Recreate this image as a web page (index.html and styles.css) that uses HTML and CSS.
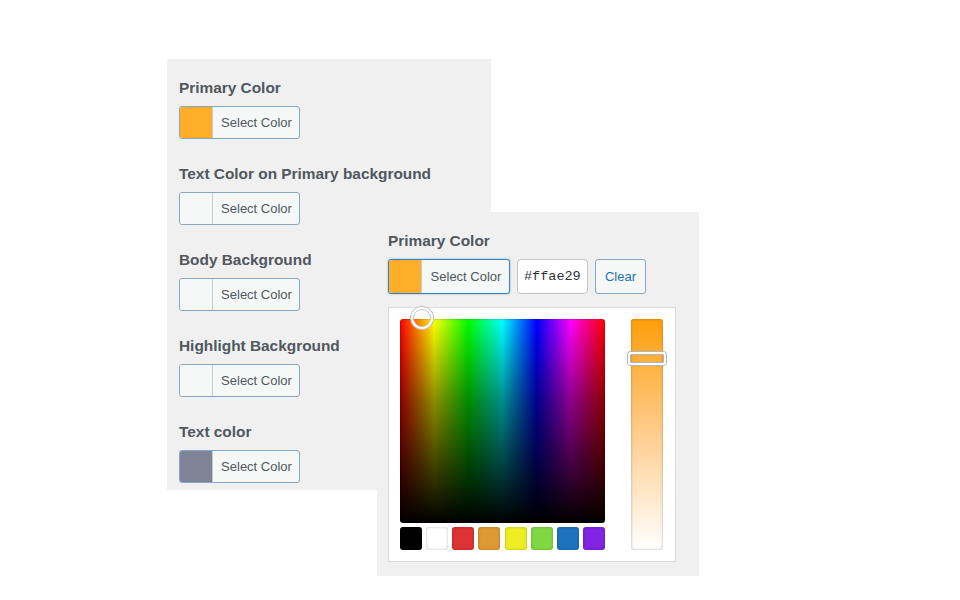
FILE: index.html
```html
<!DOCTYPE html>
<html lang="en">
<head>
  <meta charset="UTF-8">
  <title>Theme Colors</title>
  <link rel="stylesheet" href="styles.css">
</head>
<body>
  <div class="stage">
    <div class="panel">
      <div class="field">
        <h3>Primary Color</h3>
        <button class="color-result"><span class="swatch" style="background:#ffae29"></span><span class="label">Select Color</span></button>
      </div>
      <div class="field">
        <h3>Text Color on Primary background</h3>
        <button class="color-result"><span class="swatch" style="background:#f6f7f7"></span><span class="label">Select Color</span></button>
      </div>
      <div class="field">
        <h3>Body Background</h3>
        <button class="color-result"><span class="swatch" style="background:#f6f7f7"></span><span class="label">Select Color</span></button>
      </div>
      <div class="field">
        <h3>Highlight Background</h3>
        <button class="color-result"><span class="swatch" style="background:#f6f7f7"></span><span class="label">Select Color</span></button>
      </div>
      <div class="field">
        <h3>Text color</h3>
        <button class="color-result"><span class="swatch" style="background:#7c8496"></span><span class="label">Select Color</span></button>
      </div>
    </div>

    <div class="panel popup">
      <h3>Primary Color</h3>
      <div class="controls">
        <button class="color-result active"><span class="swatch" style="background:#ffae29"></span><span class="label">Select Color</span></button>
        <input class="hex" type="text" value="#ffae29">
        <button class="clear">Clear</button>
      </div>
      <div class="picker">
        <div class="left">
          <div class="square">
            <span class="dot"></span>
          </div>
          <div class="palette">
            <span style="background:#000"></span>
            <span style="background:#fff"></span>
            <span style="background:#dd3333"></span>
            <span style="background:#dd9933"></span>
            <span style="background:#eeee22"></span>
            <span style="background:#81d742"></span>
            <span style="background:#1e73be"></span>
            <span style="background:#8224e3"></span>
          </div>
        </div>
        <div class="slider">
          <span class="knob"></span>
        </div>
      </div>
    </div>
  </div>
</body>
</html>
```

FILE: styles.css
```css
* { margin:0; padding:0; box-sizing:border-box }
body {
  background:#fff; color:#50575e;
  font-family:'Liberation Sans',Arial,sans-serif;
}
.stage { position:relative; width:960px; height:600px; padding:59px 0 0 167px; }

.panel { width:324px; height:431px; background:#f0f0f0; padding:19px 12px 0; }
.field { margin-bottom:25px; }
h3 { font-size:15.4px; line-height:20px; font-weight:700; color:#50575e; margin-bottom:8px; }

.color-result {
  display:flex; height:33px; width:121px;
  border:1px solid #86a8c8; border-radius:3px; overflow:hidden;
  background:#f6f7f7; cursor:pointer; font-family:inherit;
}
.color-result .swatch { width:33px; border-right:1px solid #c8ccd0; }
.color-result .label { flex:1; font-size:13px; line-height:31px; color:#50575e; text-align:center; padding-left:1px; }

.popup {
  position:absolute; left:377px; top:212px;
  width:322px; height:364px; padding:19px 11px 0;
}
.controls { display:flex; gap:7px; height:35px; }
.controls .color-result { height:35px; width:122px; border-color:#3582c4; box-shadow:0 0 2px rgba(34,113,177,.6); }
.controls .color-result .label { line-height:33px; }
.hex {
  width:71px; height:35px; border:1px solid #c3c4c7; border-radius:4px;
  background:#fff; color:#2c3338; padding:0 6px;
  font-family:'Liberation Mono',monospace; font-size:13.5px;
}
.clear {
  width:51px; height:35px; border:1px solid #86a8c8; border-radius:3px;
  background:#f6f7f7; color:#2271b1; font-family:inherit; font-size:13px;
}

.picker {
  display:flex; justify-content:space-between;
  width:288px; height:255px; margin-top:13px;
  background:#fff; border:1px solid #dcdcde; padding:11px 12px 11px 11px;
}
.left { display:flex; flex-direction:column; gap:4px; width:205px; }
.square {
  position:relative; height:204px; border-radius:3px;
  background:
    linear-gradient(to bottom, rgba(0,0,0,0) 0%, rgba(0,0,0,.45) 40%, #000 100%),
    linear-gradient(to right, #f00, #ff0 16.7%, #0f0 33.3%, #0ff 50%, #00f 66.7%, #f0f 83.3%, #f00);
  box-shadow:inset 0 0 2px rgba(0,0,0,.4);
}
.dot {
  position:absolute; left:11px; top:-12px; width:22px; height:22px;
  border-radius:50%; border:2px solid #fff;
  box-shadow:0 0 0 1px #bdbdbd, inset 0 0 0 1px #bdbdbd;
}
.palette { display:flex; justify-content:space-between; }
.palette span {
  width:22px; height:23px; border-radius:3px;
  box-shadow:inset 0 0 3px rgba(0,0,0,.25);
}

.slider {
  position:relative; width:32px; height:231px; border-radius:3px;
  background:linear-gradient(to bottom, #ff9e0b, #ffb74f 25%, #ffd29a 55%, #fff 100%);
  box-shadow:inset 0 0 3px rgba(0,0,0,.3);
}
.knob {
  position:absolute; left:-3px; top:33px; width:38px; height:13px;
  border:2px solid #fff; border-radius:3px;
  box-shadow:0 0 0 1px #b5b5b5, inset 0 0 0 1px #b5b5b5;
}
```
